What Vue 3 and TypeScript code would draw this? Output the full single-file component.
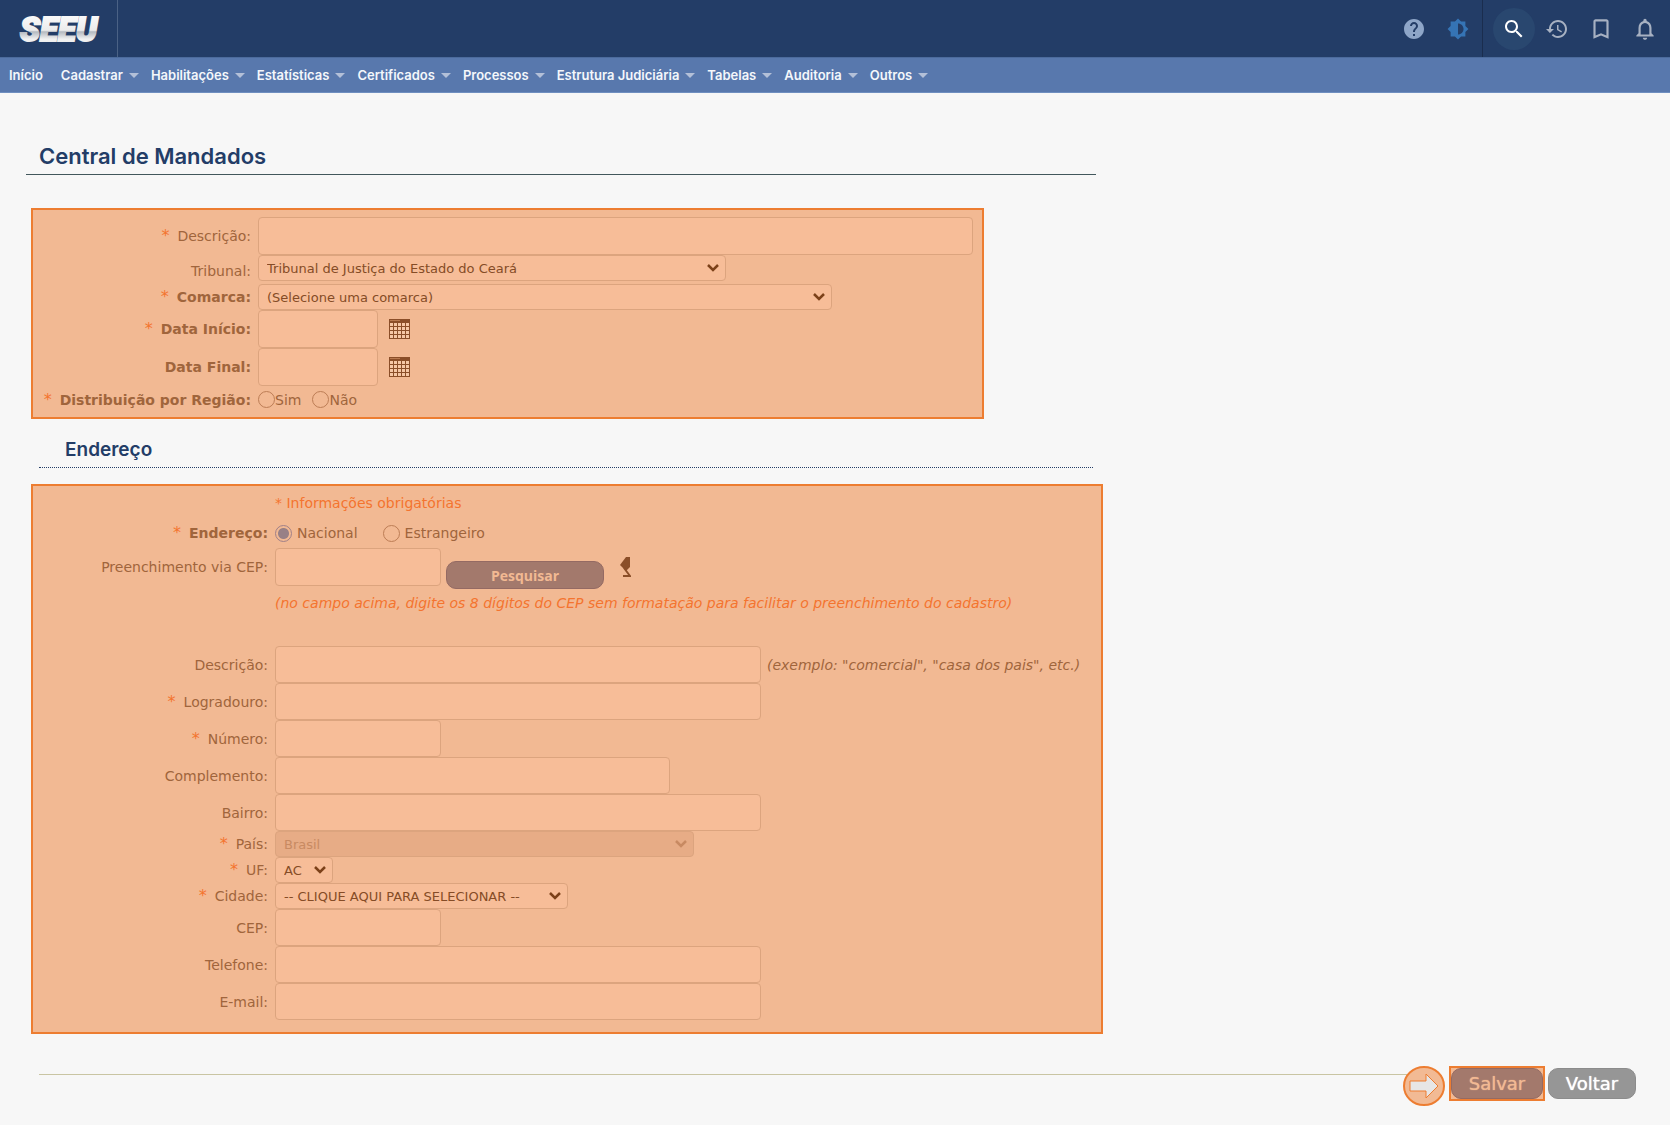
<script setup lang="ts">
import { ref } from 'vue'

interface Field {
  id: string
  label: string
  required?: boolean
  size: 'short' | 'medium' | 'long'
  note?: string
}

const menu: string[] = [
  'Cadastrar',
  'Habilitações',
  'Estatísticas',
  'Certificados',
  'Processos',
  'Estrutura Judiciária',
  'Tabelas',
  'Auditoria',
  'Outros',
]

const addressFields: Field[] = [
  { id: 'end-descricao', label: 'Descrição:', size: 'long', note: '(exemplo: "comercial", "casa dos pais", etc.)' },
  { id: 'logradouro', label: 'Logradouro:', required: true, size: 'long' },
  { id: 'numero', label: 'Número:', required: true, size: 'short' },
  { id: 'complemento', label: 'Complemento:', size: 'medium' },
  { id: 'bairro', label: 'Bairro:', size: 'long' },
]

const contactFields: Field[] = [
  { id: 'cep', label: 'CEP:', size: 'short' },
  { id: 'telefone', label: 'Telefone:', size: 'long' },
  { id: 'email', label: 'E-mail:', size: 'long' },
]

const dates = [
  { id: 'data-inicio', label: 'Data Início:', required: true },
  { id: 'data-final', label: 'Data Final:', required: false },
]

const tipo = ref('nacional')
const regiao = ref('')
</script>

<template>
  <div class="page">
    <header class="top">
      <a class="brand" href="#" aria-label="SEEU">
        <svg width="84" height="40" viewBox="0 0 84 40">
          <defs>
            <linearGradient id="metal" x1="0" y1="0" x2="0" y2="1">
              <stop offset="0" stop-color="#ffffff" />
              <stop offset="0.52" stop-color="#ececec" />
              <stop offset="0.56" stop-color="#b4b9c0" />
              <stop offset="0.75" stop-color="#f2f2f2" />
              <stop offset="1" stop-color="#e2e2e2" />
            </linearGradient>
          </defs>
          <text x="2" y="32" class="logo-text">SEEU</text>
        </svg>
      </a>
      <div class="tools">
        <button type="button" class="tool help" aria-label="Ajuda">
          <svg viewBox="0 0 24 24"><path d="M12 2C6.48 2 2 6.48 2 12s4.48 10 10 10 10-4.48 10-10S17.52 2 12 2zm1 17h-2v-2h2v2zm2.07-7.75l-.9.92C13.45 12.9 13 13.5 13 15h-2v-.5c0-1.1.45-2.1 1.17-2.83l1.24-1.26c.37-.36.59-.86.59-1.41 0-1.1-.9-2-2-2s-2 .9-2 2H8c0-2.21 1.79-4 4-4s4 1.79 4 4c0 .88-.36 1.68-.93 2.25z" /></svg>
        </button>
        <button type="button" class="tool contrast" aria-label="Contraste">
          <svg viewBox="-1 -1 26 26"><path d="M20 15.31L23.31 12 20 8.69V4h-4.69L12 .69 8.69 4H4v4.69L.69 12 4 15.31V20h4.69L12 23.31 15.31 20H20v-4.69zM12 18V6c3.31 0 6 2.69 6 6s-2.69 6-6 6z" /></svg>
        </button>
        <span class="rule"></span>
        <button type="button" class="tool search" aria-label="Pesquisar">
          <svg viewBox="0 0 24 24"><path d="M15.5 14h-.79l-.28-.27C15.41 12.59 16 11.11 16 9.5 16 5.91 13.09 3 9.5 3S3 5.91 3 9.5 5.91 16 9.5 16c1.61 0 3.09-.59 4.23-1.57l.27.28v.79l5 4.99L20.49 19l-4.99-5zm-6 0C7.01 14 5 11.99 5 9.5S7.01 5 9.5 5 14 7.01 14 9.5 11.99 14 9.5 14z" /></svg>
        </button>
        <button type="button" class="tool" aria-label="Histórico">
          <svg viewBox="0 0 24 24"><path d="M13 3c-4.97 0-9 4.03-9 9H1l3.89 3.89.07.14L9 12H6c0-3.87 3.13-7 7-7s7 3.13 7 7-3.13 7-7 7c-1.93 0-3.68-.79-4.94-2.06l-1.42 1.42C8.27 19.99 10.51 21 13 21c4.97 0 9-4.03 9-9s-4.03-9-9-9zm-1 5v5l4.28 2.54.72-1.21-3.5-2.08V8H12z" /></svg>
        </button>
        <button type="button" class="tool large" aria-label="Favoritos">
          <svg viewBox="0 0 24 24"><path d="M17 3H7c-1.1 0-1.99.9-1.99 2L5 21l7-3 7 3V5c0-1.1-.9-2-2-2zm0 15l-5-2.18L7 18V5h10v13z" /></svg>
        </button>
        <button type="button" class="tool large" aria-label="Notificações">
          <svg viewBox="0 0 24 24"><path d="M12 22c1.1 0 2-.9 2-2h-4c0 1.1.89 2 2 2zm6-6v-5c0-3.07-1.64-5.64-4.5-6.32V4c0-.83-.67-1.5-1.5-1.5s-1.5.67-1.5 1.5v.68C7.63 5.36 6 7.92 6 11v5l-2 2v1h16v-1l-2-2zm-2 1H8v-6c0-2.48 1.51-4.5 4-4.5s4 2.02 4 4.5v6z" /></svg>
        </button>
      </div>
    </header>

    <nav class="menu">
      <a href="#" class="item home">Início</a>
      <a v-for="m in menu" :key="m" href="#" class="item">{{ m }}<span class="caret"></span></a>
    </nav>

    <main>
      <h1>Central de Mandados</h1>

      <section class="panel panel-main">
        <div class="row tall">
          <label class="name" for="descricao"><i>*</i>Descrição:</label>
          <input id="descricao" type="text" class="full" />
        </div>
        <div class="row spaced">
          <label class="name" for="tribunal">Tribunal:</label>
          <span class="pick pick-tribunal">
            <select id="tribunal"><option>Tribunal de Justiça do Estado do Ceará</option></select>
            <svg viewBox="0 0 12 8"><path d="M1 1l5 5 5-5" /></svg>
          </span>
        </div>
        <div class="row">
          <label class="name strong" for="comarca"><i>*</i>Comarca:</label>
          <span class="pick pick-comarca">
            <select id="comarca"><option>(Selecione uma comarca)</option></select>
            <svg viewBox="0 0 12 8"><path d="M1 1l5 5 5-5" /></svg>
          </span>
        </div>
        <div v-for="d in dates" :key="d.id" class="row tall">
          <label class="name strong" :for="d.id"><i v-if="d.required">*</i>{{ d.label }}</label>
          <input :id="d.id" type="text" class="date" />
          <button type="button" class="calendar" aria-label="Abrir calendário">
            <svg width="21" height="20" viewBox="0 0 21 20">
              <path d="M0 0h21v20H0z" fill="#8b4e28" />
              <g fill="#f6c7a5">
                <template v-for="r in 4" :key="r">
                  <rect v-for="c in 5" :key="c" :x="c * 4 - 3" :y="r * 4" width="3" height="3" />
                </template>
              </g>
              <path d="M1 1h10v1H1z" fill="#b97a50" />
            </svg>
          </button>
        </div>
        <div class="row radios region" role="radiogroup" aria-labelledby="regiao-nome">
          <span id="regiao-nome" class="name strong"><i>*</i>Distribuição por Região:</span>
          <label class="choice near"><input v-model="regiao" type="radio" name="regiao" value="sim" />Sim</label>
          <label class="choice near"><input v-model="regiao" type="radio" name="regiao" value="nao" />Não</label>
        </div>
      </section>

      <h2>Endereço</h2>

      <section class="panel panel-address">
        <p class="info">* Informações obrigatórias</p>
        <div class="row radios" role="radiogroup" aria-labelledby="tipo-nome">
          <span id="tipo-nome" class="name strong"><i>*</i>Endereço:</span>
          <label class="choice"><input v-model="tipo" type="radio" name="tipo" value="nacional" />Nacional</label>
          <label class="choice"><input v-model="tipo" type="radio" name="tipo" value="estrangeiro" />Estrangeiro</label>
        </div>
        <div class="row tall">
          <label class="name" for="busca-cep">Preenchimento via CEP:</label>
          <input id="busca-cep" type="text" class="short" />
          <button type="button" class="find">Pesquisar</button>
          <button type="button" class="erase" aria-label="Limpar">
            <svg width="12" height="22" viewBox="0 0 12 22">
              <path d="M7 1h4v10l-4 4-6-6z" fill="#8b4e28" />
              <path d="M5 12l6 8H4" fill="none" stroke="#8b4e28" stroke-width="2" />
            </svg>
          </button>
        </div>
        <p class="hint">(no campo acima, digite os 8 dígitos do CEP sem formatação para facilitar o preenchimento do cadastro)</p>

        <div v-for="f in addressFields" :key="f.id" class="row">
          <label class="name" :for="f.id"><i v-if="f.required">*</i>{{ f.label }}</label>
          <input :id="f.id" type="text" :class="f.size" />
          <em v-if="f.note" class="note">{{ f.note }}</em>
        </div>
        <div class="row">
          <label class="name" for="pais"><i>*</i>País:</label>
          <span class="pick pick-pais">
            <select id="pais" disabled><option>Brasil</option></select>
            <svg viewBox="0 0 12 8"><path d="M1 1l5 5 5-5" /></svg>
          </span>
        </div>
        <div class="row">
          <label class="name" for="uf"><i>*</i>UF:</label>
          <span class="pick pick-uf">
            <select id="uf"><option>AC</option></select>
            <svg viewBox="0 0 12 8"><path d="M1 1l5 5 5-5" /></svg>
          </span>
        </div>
        <div class="row">
          <label class="name" for="cidade"><i>*</i>Cidade:</label>
          <span class="pick pick-cidade">
            <select id="cidade"><option>-- CLIQUE AQUI PARA SELECIONAR --</option></select>
            <svg viewBox="0 0 12 8"><path d="M1 1l5 5 5-5" /></svg>
          </span>
        </div>
        <div v-for="f in contactFields" :key="f.id" class="row">
          <label class="name" :for="f.id">{{ f.label }}</label>
          <input :id="f.id" type="text" :class="f.size" />
        </div>
      </section>

      <footer class="actions">
        <span class="line"></span>
        <svg class="pointer" width="42" height="40" viewBox="0 0 42 40">
          <ellipse cx="21" cy="20" rx="20" ry="19" fill="#f2ba94" stroke="#ed7d31" stroke-width="2" />
          <path d="M7 15h16V8l12 12-12 12v-7H7z" fill="#e7e6e6" stroke="#ed7d31" stroke-width="1" />
        </svg>
        <span class="buttons">
          <span class="marked"><button type="button" class="save">Salvar</button></span>
          <button type="button" class="back">Voltar</button>
        </span>
      </footer>
    </main>
  </div>
</template>

<style>
body {
  margin: 0;
  background: #f7f7f7;
}
</style>

<style scoped>
* {
  box-sizing: border-box;
}

.page {
  font-family: 'DejaVu Sans', Verdana, sans-serif;
  font-size: 14px;
  color: #a0653c;
}

button {
  border: 0;
  padding: 0;
  background: none;
  font-family: inherit;
  cursor: pointer;
}

.top {
  display: flex;
  justify-content: space-between;
  height: 57px;
  background: #233d67;
}

.brand {
  display: flex;
  align-items: center;
  padding: 0 15px 0 18px;
  border-right: 1px solid #4b6285;
}

.brand svg {
  overflow: visible;
}

.logo-text {
  font: italic 900 33px Roboto, sans-serif;
  fill: url(#metal);
  stroke: url(#metal);
  stroke-width: 2px;
}

.tools {
  display: flex;
  align-items: center;
  gap: 20px;
  padding-right: 13px;
}

.tool {
  display: flex;
  align-items: center;
  justify-content: center;
  width: 24px;
  height: 24px;
  fill: #a7b1c2;
}

.tool svg {
  flex: none;
  width: 24px;
  height: 24px;
}

.tool.large svg {
  width: 26px;
  height: 26px;
}

.help {
  fill: #8ea6c8;
}

.contrast {
  fill: #3574b5;
}

.rule {
  align-self: stretch;
  width: 1px;
  margin: 0 -10px 0 -8px;
  background: #1a2d4e;
}

.search {
  width: 42px;
  height: 42px;
  margin-right: -10px;
  border-radius: 50%;
  background: #29476f;
  fill: #fff;
}

.menu {
  display: flex;
  align-items: center;
  gap: 12px;
  height: 36px;
  padding: 0 9px;
  border-top: 1px solid #4c6b9c;
  border-bottom: 1px solid #6f8fc0;
  background: #5878ad;
}

.item {
  display: flex;
  align-items: center;
  gap: 6px;
  font: 600 13px/20px Inter, sans-serif;
  color: #f4f7fb;
  text-decoration: none;
}

.home {
  margin-right: 6px;
}

.caret {
  border: 5px solid transparent;
  border-top-color: #b3c0d8;
  border-bottom: 0;
}

main {
  padding: 47px 34px 24px 26px;
}

h1 {
  max-width: 1070px;
  margin: 0 0 33px;
  padding: 0 13px 2px;
  border-bottom: 1px solid #42575c;
  font: 600 22px/32px Inter, sans-serif;
  color: #233d67;
}

h2 {
  max-width: 1054px;
  margin: 19px 0 16px 13px;
  padding: 0 26px 5px;
  border-bottom: 1px dotted #233d67;
  font: 600 19px/24px Inter, sans-serif;
  color: #233d67;
}

.panel {
  margin-left: 5px;
  border: 2px solid #ed7d31;
  background: #f2b993;
}

.panel-main {
  --label: 218px;
  max-width: 953px;
  padding: 7px 9px 4px 0;
}

.panel-address {
  --label: 235px;
  max-width: 1072px;
  padding: 7px 0 12px;
}

.row {
  display: flex;
  align-items: center;
}

.name {
  flex: none;
  width: var(--label);
  margin-right: 7px;
  text-align: right;
  line-height: 20px;
}

.strong {
  font-weight: 700;
}

.name i {
  margin-right: 8px;
  font-size: 16px;
  font-style: normal;
  font-weight: 400;
  line-height: 16px;
  color: #f4742f;
}

input[type='text'] {
  width: 100%;
  height: 37px;
  padding: 0 8px;
  border: 1px solid #dca47e;
  border-radius: 4px;
  background: #f7bd98;
  color: #854c26;
  font: inherit;
}

.tall input[type='text'] {
  height: 38px;
}

.row .full {
  max-width: 716px;
}

.row .date {
  max-width: 120px;
}

.row .short {
  max-width: 166px;
}

.row .medium {
  max-width: 395px;
}

.row .long {
  max-width: 486px;
}

.spaced {
  align-items: flex-start;
  padding-bottom: 3px;
}

.spaced .name {
  padding-top: 6px;
}

.pick {
  position: relative;
  width: 100%;
  height: 26px;
}

.pick select {
  display: block;
  width: 100%;
  height: 26px;
  padding: 0 8px;
  appearance: none;
  border: 1px solid #dca47e;
  border-radius: 4px;
  background: #f7bd98;
  color: #854c26;
  font-family: inherit;
  font-size: 13px;
}

.pick svg {
  position: absolute;
  top: 9px;
  right: 7px;
  width: 12px;
  height: 8px;
  fill: none;
  stroke: #7c4119;
  stroke-width: 2.5;
  pointer-events: none;
}

.pick select:disabled {
  background: #e7ac86;
  color: #c88a62;
  opacity: 1;
}

.pick select:disabled + svg {
  stroke: #c88a62;
}

.pick-tribunal {
  max-width: 468px;
}

.pick-comarca {
  max-width: 574px;
}

.pick-pais {
  max-width: 419px;
}

.pick-uf {
  max-width: 58px;
}

.pick-cidade {
  max-width: 293px;
}

.calendar,
.erase {
  display: flex;
  flex: none;
  margin-left: 11px;
}

.erase {
  margin-left: 15px;
}

.radios {
  height: 30px;
}

.region {
  height: 27px;
}

.choice {
  display: flex;
  align-items: center;
  gap: 5px;
  margin-right: 25px;
}

.near {
  gap: 0;
  margin-right: 11px;
}

.choice input {
  width: 17px;
  height: 17px;
  margin: 0;
  appearance: none;
  border: 1px solid #bd7d55;
  border-radius: 50%;
}

.choice input:checked {
  border-color: #a08088;
  background: radial-gradient(circle, #988086 5px, transparent 6px);
}

.info,
.hint {
  margin: 0 0 0 242px;
  line-height: 20px;
  color: #f4742f;
}

.info {
  margin-bottom: 5px;
}

.hint {
  margin-top: 7px;
  margin-bottom: 33px;
  font-style: italic;
}

.find {
  flex: none;
  align-self: flex-end;
  width: 158px;
  height: 28px;
  margin: 0 0 -3px 5px;
  border: 1px solid #946a63;
  border-radius: 10px;
  background: #a3796c;
  color: #f2b993;
  font-family: 'Open Sans', sans-serif;
  font-size: 14px;
  font-weight: 700;
}

.note {
  flex: none;
  margin-left: 6px;
}

.actions {
  display: flex;
  align-items: flex-start;
  margin: 32px 0 0 13px;
}

.line {
  flex: 1;
  height: 1px;
  margin: 8px -5px 0 0;
  background: #c9c5a3;
}

.pointer {
  flex: none;
  margin-right: 4px;
}

.buttons {
  display: flex;
  align-items: center;
  gap: 3px;
}

.marked {
  border: 2px solid #ed7d31;
  background: #f2b993;
}

.save,
.back {
  display: block;
  height: 31px;
  border: 1px solid #8c8c8c;
  border-radius: 10px;
  background: #969696;
  color: #fff;
  font-size: 18px;
  text-shadow: 0 0 1px currentColor;
}

.save {
  width: 92px;
  border-color: #946a63;
  background: #a3796c;
  color: #f2b993;
}

.back {
  width: 88px;
}
</style>
